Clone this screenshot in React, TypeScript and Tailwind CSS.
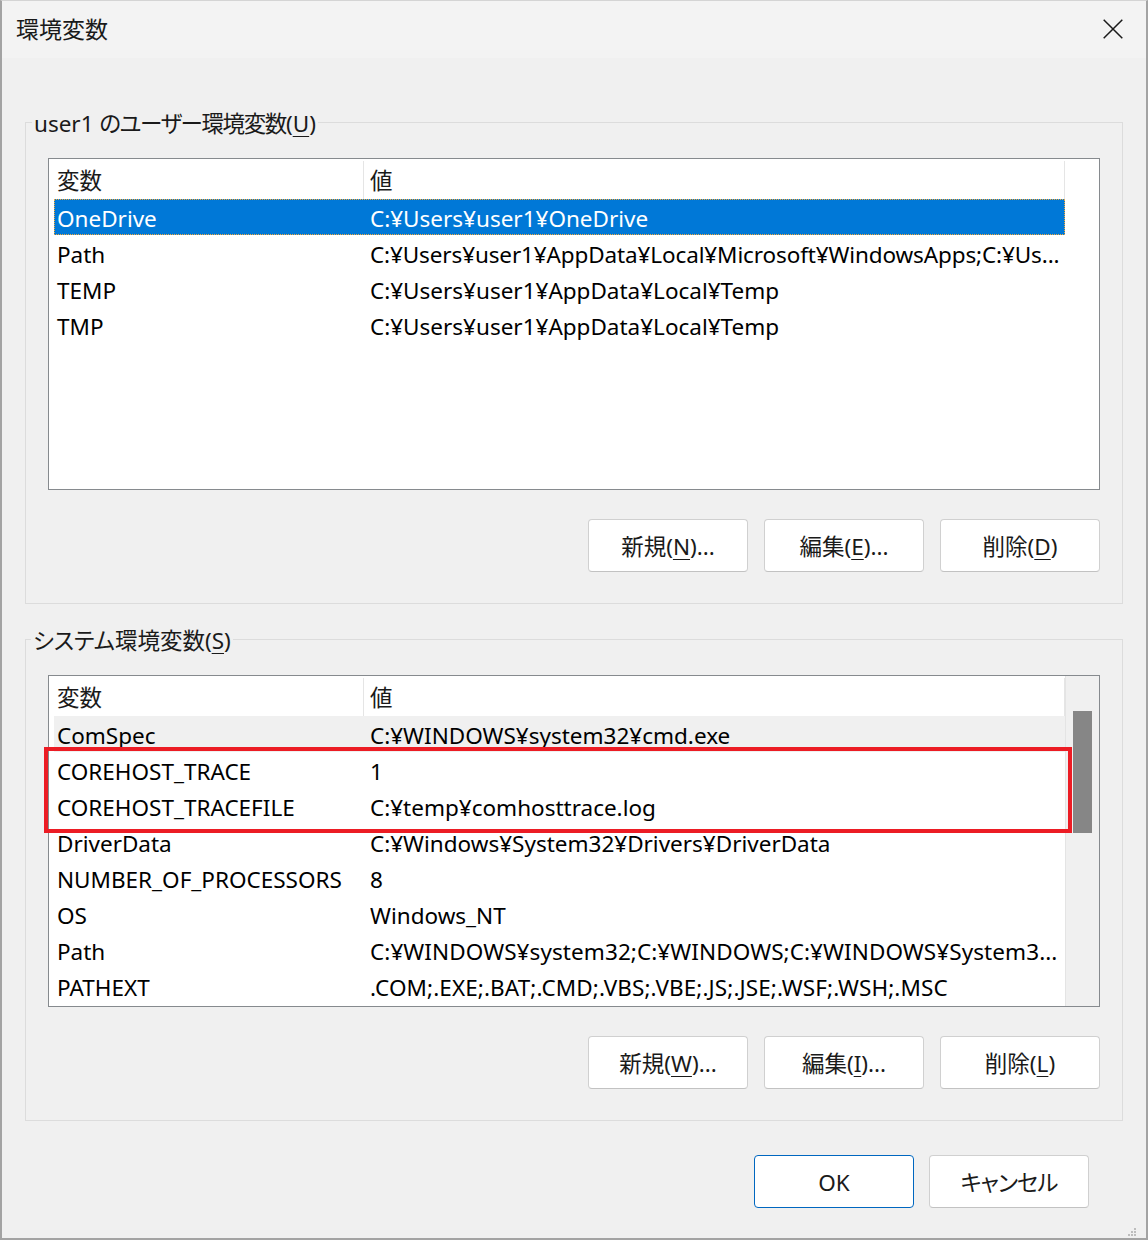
import React from "react";

type RowProps = { name: string; value: string; selected?: boolean; hover?: boolean; track?: string };

function Row({ name, value, selected, hover, track }: RowProps) {
  const cls = selected
    ? "bg-[#0078d7] text-white outline outline-1 outline-dotted outline-[#f2a93b] -outline-offset-1"
    : hover
    ? "bg-[#f0f0f0] text-black"
    : "text-black";
  return (
    <div className={`ml-[5px] w-[1011px] h-[36px] shrink-0 flex items-center whitespace-nowrap pt-[4px] leading-[30px] ${cls}`}>
      <div className="w-[316px] pl-[3px] shrink-0">{name}</div>
      <div className={`flex-1 overflow-hidden ${track ?? ""}`}>{value}</div>
    </div>
  );
}

function Header() {
  return (
    <div className="h-[40px] flex shrink-0 bg-white leading-[30px]">
      <div className="w-[314px] pl-[8px] flex items-center pt-[4px]">変数</div>
      <div className="w-px bg-[#e5e5e5] mt-[2px]" />
      <div className="w-[700px] pl-[6px] flex items-center pt-[4px]">値</div>
      <div className="w-px bg-[#e5e5e5] mt-[2px]" />
    </div>
  );
}

function Btn({ children, primary }: { children: React.ReactNode; primary?: boolean }) {
  return (
    <div
      className={`w-[160px] h-[53px] rounded-[4px] bg-white flex items-center justify-center pt-[3px] leading-[30px] border ${
        primary ? "border-[#0067c0]" : "border-[#d0d0d0] border-b-[#c2c2c2]"
      }`}
    >
      {children}
    </div>
  );
}

function U({ children }: { children: React.ReactNode }) {
  return <span className="underline underline-offset-[4px] decoration-1">{children}</span>;
}

export default function App() {
  const userRows: RowProps[] = [
    { name: "OneDrive", value: "C:¥Users¥user1¥OneDrive", selected: true },
    {
      name: "Path",
      value: "C:¥Users¥user1¥AppData¥Local¥Microsoft¥WindowsApps;C:¥Us...",
      track: "tracking-[-0.12px]",
    },
    { name: "TEMP", value: "C:¥Users¥user1¥AppData¥Local¥Temp" },
    { name: "TMP", value: "C:¥Users¥user1¥AppData¥Local¥Temp" },
  ];
  const sysRows: RowProps[] = [
    { name: "ComSpec", value: "C:¥WINDOWS¥system32¥cmd.exe", hover: true },
    { name: "COREHOST_TRACE", value: "1" },
    { name: "COREHOST_TRACEFILE", value: "C:¥temp¥comhosttrace.log" },
    { name: "DriverData", value: "C:¥Windows¥System32¥Drivers¥DriverData" },
    { name: "NUMBER_OF_PROCESSORS", value: "8" },
    { name: "OS", value: "Windows_NT" },
    {
      name: "Path",
      value: "C:¥WINDOWS¥system32;C:¥WINDOWS;C:¥WINDOWS¥System3...",
      track: "tracking-[0.08px]",
    },
    {
      name: "PATHEXT",
      value: ".COM;.EXE;.BAT;.CMD;.VBS;.VBE;.JS;.JSE;.WSF;.WSH;.MSC",
      track: "tracking-[0.1px]",
    },
  ];

  return (
    <div className="relative w-[1148px] h-[1240px] bg-[#f0f0f0] border-l-2 border-r-2 border-b-2 border-t border-l-[#a3a3a3] border-r-[#a3a3a3] border-b-[#a3a3a3] border-t-[#d4d4d4] flex flex-col text-[22.5px] leading-none text-[#1a1a1a] font-['Noto_Sans','Noto_Sans_CJK_JP',sans-serif] [font-feature-settings:'palt'] overflow-hidden">
      {/* title bar */}
      <div className="h-[57px] bg-[#f3f3f3] flex items-center justify-between pl-[14px] pr-[23px] shrink-0">
        <div className="text-[23px] leading-[30px] mb-[3px] text-[#1a1a1a] font-['Noto_Sans_CJK_JP',sans-serif] [font-feature-settings:normal]">
          環境変数
        </div>
        <svg width="20" height="20" viewBox="0 0 20 20" className="mb-[1px]">
          <path d="M0.7 0.7 L19.3 19.3 M19.3 0.7 L0.7 19.3" stroke="#1a1a1a" strokeWidth="1.5" fill="none" />
        </svg>
      </div>

      {/* user group */}
      <fieldset className="mx-[23px] mt-[49px] border border-[#dcdcdc] p-0">
        <legend className="ml-[6px] px-[2px] h-[30px] leading-[30px] pt-[2px] text-[#1a1a1a]">
          user1 <span className="tracking-[-1.4px]">のユーザー環境変数</span>(<U>U</U>)
        </legend>
        <div className="px-[22px] pb-[31px]">
          <div className="mt-[21px] h-[332px] border border-[#868a8e] bg-white flex flex-col overflow-hidden">
            <Header />
            {userRows.map((r) => (
              <Row key={r.name} {...r} />
            ))}
          </div>
          <div className="mt-[29px] flex justify-end gap-4">
            <Btn>
              新規(<U>N</U>)...
            </Btn>
            <Btn>
              編集(<U>E</U>)...
            </Btn>
            <Btn>
              削除(<U>D</U>)
            </Btn>
          </div>
        </div>
      </fieldset>

      {/* system group */}
      <fieldset className="mx-[23px] mt-[20px] border border-[#dcdcdc] p-0">
        <legend className="ml-[5px] px-[2px] h-[30px] leading-[30px] pt-[2px] text-[#1a1a1a]">
          システム環境変数(<U>S</U>)
        </legend>
        <div className="px-[22px] pb-[31px]">
          <div className="relative mt-[21px] h-[332px]">
            <div className="h-full border border-[#868a8e] bg-white flex overflow-hidden">
              <div className="w-[1016px] flex flex-col overflow-hidden">
                <Header />
                {sysRows.map((r) => (
                  <Row key={r.name} {...r} />
                ))}
              </div>
              <div className="flex-1 bg-[#f0f0f0] border-l border-[#e4e4e4] pt-[35px] pl-[7px]">
                <div className="w-[19px] h-[122px] bg-[#868686]" />
              </div>
            </div>
            {/* red highlight */}
            <div className="absolute left-[-4px] top-[72px] w-[1028px] h-[86px] border-[4px] border-[#ec1c24] pointer-events-none" />
          </div>
          <div className="mt-[29px] flex justify-end gap-4">
            <Btn>
              新規(<U>W</U>)...
            </Btn>
            <Btn>
              編集(<U>I</U>)...
            </Btn>
            <Btn>
              削除(<U>L</U>)
            </Btn>
          </div>
        </div>
      </fieldset>

      {/* OK / Cancel */}
      <div className="mt-[34px] flex justify-end gap-[15px] pr-[57px]">
        <Btn primary>OK</Btn>
        <Btn>
          <span className="tracking-[-1px]">キャンセル</span>
        </Btn>
      </div>

      {/* resize grip */}
      <svg width="10" height="10" viewBox="0 0 10 10" className="absolute right-[9px] bottom-[1px]">
        <rect x="7" y="1" width="2" height="2" fill="#bdbdbd" />
        <rect x="4" y="4" width="2" height="2" fill="#bdbdbd" />
        <rect x="7" y="4" width="2" height="2" fill="#bdbdbd" />
        <rect x="1" y="7" width="2" height="2" fill="#bdbdbd" />
        <rect x="4" y="7" width="2" height="2" fill="#bdbdbd" />
        <rect x="7" y="7" width="2" height="2" fill="#bdbdbd" />
      </svg>
    </div>
  );
}
